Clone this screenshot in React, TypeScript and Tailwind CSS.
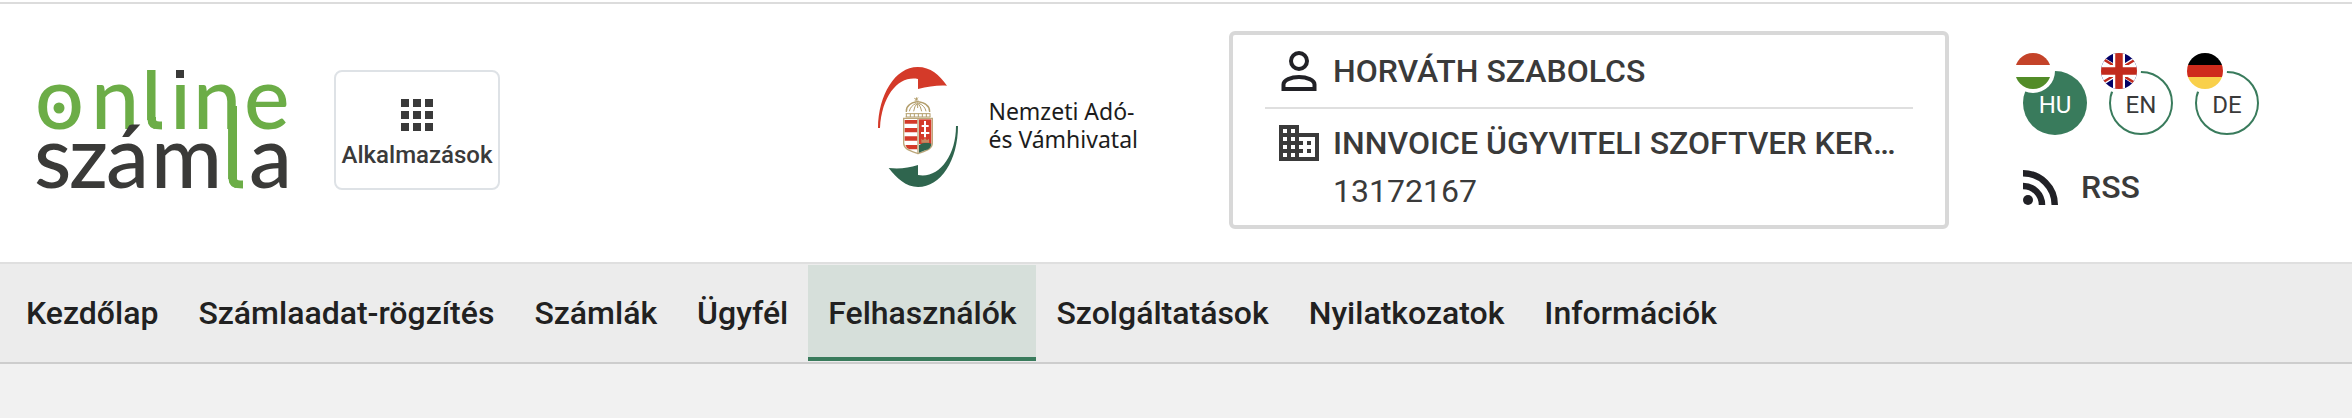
import React from "react";

const navItems = [
  "Kezdőlap",
  "Számlaadat-rögzítés",
  "Számlák",
  "Ügyfél",
  "Felhasználók",
  "Szolgáltatások",
  "Nyilatkozatok",
  "Információk",
];

function OnlineSzamlaLogo() {
  return (
    <svg
      viewBox="35 70 252 120"
      className="h-[120px] w-[252px] shrink-0 overflow-visible font-[Lato,sans-serif] text-[86px] font-medium"
      role="img"
      aria-label="online számla"
    >
      <g fill="#6cad47">
        <text x="35" y="129">o</text>
        <text x="91" y="129">n</text>
        <text x="141" y="129">l</text>
        <text x="170" y="129">i</text>
        <text x="193" y="129">n</text>
        <text x="244" y="129">e</text>
        <circle cx="59" cy="108" r="5.5" />
      </g>
      <g fill="#3a3a38">
        <text x="34" y="188">s</text>
        <text x="69" y="188">z</text>
        <text x="106" y="188">á</text>
        <text x="151" y="188">m</text>
        <text x="249" y="188">a</text>
      </g>
      <text x="222" y="188" fill="#6cad47">l</text>
      <g fill="#fff">
        <path d="M145 60H160V70H145ZM172 60H188V82H172Z" />
        <path d="M146 120H147.500Q148 129 158 129.500H146ZM227 179H228.500Q229 188 239 188.500H227Z" />
      </g>
      <rect x="176" y="70" width="8" height="8" fill="#3a3a38" />
      <path
        d="M152 117V120Q152 125.500 162 125.500M233 106V179Q233 184.500 243 184.500"
        fill="none"
        stroke="#6cad47"
        strokeWidth="8"
      />
    </svg>
  );
}

function NavEmblem() {
  return (
    <svg viewBox="24 21 240 360" className="h-[120px] w-20 shrink-0" aria-hidden="true">
      <path
        d="M24 204C25 105 75 21 143 21C182 21 208 45 231 77C205 75 175 79 144 87V57C90 46 36 100 30 204Z"
        fill="#d43a29"
      />
      <path
        d="M264 198C264 300 213 381 144 381C108 381 80 355 56 324C90 327 115 324 144 315V345C205 357 258 290 258 198Z"
        fill="#2f654e"
      />
      <path
        d="M101 175H187V250C187 268 165 273 144 281C123 273 101 268 101 250Z"
        fill="#fff"
        stroke="#bca77a"
        strokeWidth="4"
      />
      <path d="M104 180H142V191H104ZM104 204H142V217H104ZM104 229H142V242H104ZM106 255H142V268H118Q109 264 106 255Z" fill="#d43a29" />
      <path d="M147 178H184V252H147Z" fill="#d43a29" />
      <path d="M147 278V255Q165 244 184 251Q184 266 165 271Z" fill="#2f654e" />
      <path d="M144 176V280" stroke="#bca77a" strokeWidth="4" />
      <path d="M165 183V232M155 198H176M153 219H178" stroke="#fff" strokeWidth="6" fill="none" />
      <path d="M154 236L159 241L165 234L171 241L177 236V248H154Z" fill="#c58a62" />
      <g fill="none" stroke="#b39e6c" strokeWidth="3">
        <path d="M107 171H181M107 161H181M109 161V171M121 161V171M133 161V171M145 161V171M157 161V171M169 161V171M180 161V171" />
        <path d="M109 156Q107 130 143 125Q180 130 179 156" strokeWidth="4" />
        <path d="M118 154Q121 138 139 130M131 154Q132 140 143 128Q153 140 155 154M143 130V144M147 130Q165 138 168 154" />
        <path d="M138 125L140 112M133 115L145 121M144 113L135 122" />
      </g>
    </svg>
  );
}

function FlagHu() {
  return (
    <svg viewBox="0 0 36 36" className="size-9 rounded-full" aria-hidden="true">
      <path d="M0 0H36V12H0Z" fill="#c44329" />
      <path d="M0 12H36V24H0Z" fill="#fff" />
      <path d="M0 24H36V36H0Z" fill="#528c28" />
    </svg>
  );
}

function FlagGb() {
  return (
    <svg viewBox="0 0 36 36" className="size-9 rounded-full" aria-hidden="true">
      <path d="M0 0H36V36H0Z" fill="#010066" />
      <path d="M-6 3L42 33M-6 33L42 3" stroke="#fff" strokeWidth="7" />
      <path d="M-6 1L15 14M21 22L42 35M-6 34L14 22M22 14L42 2" stroke="#c22a1d" strokeWidth="2.5" />
      <path d="M18 0V36M0 18H36" stroke="#fff" strokeWidth="12" />
      <path d="M18 0V36M0 18H36" stroke="#c22a1d" strokeWidth="7.5" />
    </svg>
  );
}

function FlagDe() {
  return (
    <svg viewBox="0 0 36 36" className="size-9 rounded-full" aria-hidden="true">
      <path d="M0 0H36V12H0Z" fill="#000" />
      <path d="M0 12H36V24H0Z" fill="#cf2b1c" />
      <path d="M0 24H36V36H0Z" fill="#f9d04b" />
    </svg>
  );
}

function Language({ code, flag, active }: { code: string; flag: React.ReactNode; active?: boolean }) {
  return (
    <button
      type="button"
      aria-pressed={!!active}
      className={
        active
          ? "relative flex size-16 items-center justify-center rounded-full bg-[#397b5c] pt-1 text-2xl text-white"
          : "relative flex size-16 items-center justify-center rounded-full border-2 border-[#397b5c] bg-white pt-1 text-2xl text-[#3a3a3a]"
      }
    >
      {code}
      <span className={active ? "absolute -left-3 -top-[22px] rounded-full bg-white p-1" : "absolute -left-3.5 -top-6 rounded-full bg-white p-1"}>
        {flag}
      </span>
    </button>
  );
}

export default function App() {
  return (
    <div className="min-h-screen bg-[#f1f1f1] font-[Roboto,sans-serif] text-[#3a3a3a]">
      <div className="h-0.5 bg-white" />
      <header className="flex items-center border-t-2 border-[#dcdcdc] bg-white pb-[33px] pl-[35px] pr-[93px] pt-[27px]">
        <div className="flex flex-1 items-center gap-[47px]">
          <a href="#" className="shrink-0">
            <OnlineSzamlaLogo />
          </a>
          <button
            type="button"
            className="flex h-[120px] w-[166px] flex-col items-center justify-center gap-2 rounded-lg border-2 border-[#dee2e6] text-2xl font-medium leading-8"
          >
            <svg viewBox="0 0 32 32" className="mt-2.5 size-8 shrink-0" fill="#3a3a3a" aria-hidden="true">
              <path d="M0 0h8v8H0zM12 0h8v8h-8zM24 0h8v8h-8zM0 12h8v8H0zM12 12h8v8h-8zM24 12h8v8h-8zM0 24h8v8H0zM12 24h8v8h-8zM24 24h8v8h-8z" />
            </svg>
            Alkalmazások
          </button>
        </div>

        <div className="mb-1.5 mr-[91px] flex items-center gap-[30px]">
          <NavEmblem />
          <p className="whitespace-nowrap pb-1 font-['Noto_Sans',sans-serif] text-[23px] leading-7 text-[#1c1c1c]">
            Nemzeti Adó-
            <br />
            és Vámhivatal
          </p>
        </div>

        <section className="w-[720px] rounded-md border-4 border-[#d8d8d8] px-8 pb-2.5 text-[32px]">
          <div className="flex h-[74px] items-center gap-4 border-b-2 border-[#dfdfdf] pl-4 font-medium">
            <svg viewBox="0 0 36 40" className="h-10 w-9 shrink-0" fill="none" stroke="#212126" strokeWidth="4" aria-hidden="true">
              <circle cx="18" cy="10" r="8" />
              <path d="M2.500 38V33.500C2.500 29 10 26 18 26S33.500 29 33.500 33.500V38Z" />
            </svg>
            <span>HORVÁTH SZABOLCS</span>
          </div>
          <div className="flex items-start gap-2.5 pl-2.5 pt-2.5">
            <svg viewBox="0 0 24 24" className="size-12 shrink-0" fill="#3a3a3a" aria-hidden="true">
              <path d="M12 7V3H2v18h20V7H12zM6 19H4v-2h2v2zm0-4H4v-2h2v2zm0-4H4V9h2v2zm0-4H4V5h2v2zm4 12H8v-2h2v2zm0-4H8v-2h2v2zm0-4H8V9h2v2zm0-4H8V5h2v2zm10 12h-8v-2h2v-2h-2v-2h2v-2h-2V9h8v10zm-2-8h-2v2h2v-2zm0 4h-2v2h2v-2z" />
            </svg>
            <div className="min-w-0 leading-[48px]">
              <p className="whitespace-nowrap font-medium">INNVOICE ÜGYVITELI SZOFTVER KER…</p>
              <p>13172167</p>
            </div>
          </div>
        </section>

        <div className="ml-[74px] flex flex-col gap-[30px] pt-5">
          <div className="flex gap-[22px]">
            <Language code="HU" flag={<FlagHu />} active />
            <Language code="EN" flag={<FlagGb />} />
            <Language code="DE" flag={<FlagDe />} />
          </div>
          <a href="#" className="flex items-center gap-[23px] text-[32px] font-medium leading-[44px]">
            <svg viewBox="0 0 35 35" className="size-[35px]" fill="none" stroke="#212126" strokeWidth="6.500" aria-hidden="true">
              <circle cx="5" cy="30" r="5" fill="#212126" stroke="none" />
              <path d="M0 3.250A31.750 31.750 0 0 1 31.750 35M0 16A19 19 0 0 1 19 35" />
            </svg>
            RSS
          </a>
        </div>
      </header>

      <nav className="border-b-2 border-t-2 border-b-[#cdcdcd] border-t-[#dfdfdf] bg-[#ececec] px-1.5 py-px">
        <ul className="flex text-[32px] font-medium text-[#212121]">
          {navItems.map((item) => (
            <li key={item}>
              <a
                href="#"
                aria-current={item === "Felhasználók" ? "page" : undefined}
                className={
                  item === "Felhasználók"
                    ? "flex h-24 items-center whitespace-nowrap border-b-4 border-[#397b5c] bg-[#d6dfda] px-5 pt-1"
                    : "flex h-24 items-center whitespace-nowrap border-b-4 border-transparent px-5 pt-1"
                }
              >
                {item}
              </a>
            </li>
          ))}
        </ul>
      </nav>
    </div>
  );
}
